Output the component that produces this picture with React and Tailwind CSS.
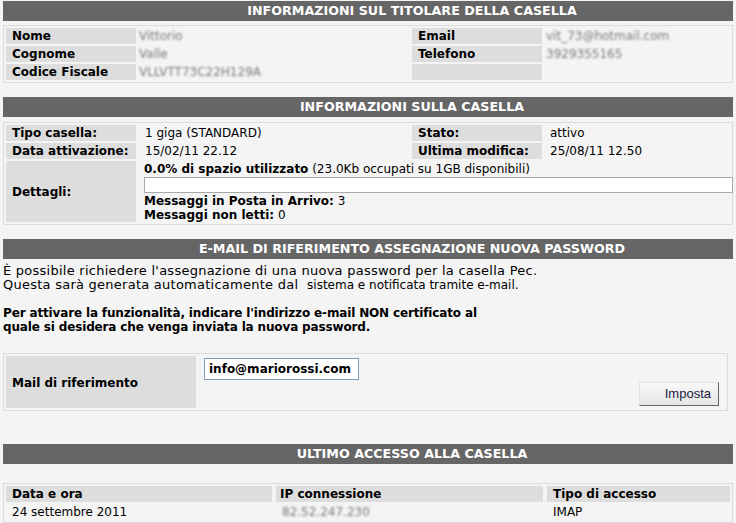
import React from 'react';

const font = { fontFamily: '"DejaVu Sans", Verdana, sans-serif' };

function Header({ children }) {
  return (
    <div className="h-[20px] bg-[#666666] text-white font-bold text-[12.7px] leading-[20px] text-center pl-[88px]">
      {children}
    </div>
  );
}

function Blur({ children }) {
  return (
    <span className="inline-block text-[#7a7a7a] blur-[1.2px] whitespace-nowrap">
      {children}
    </span>
  );
}

export default function App() {
  return (
    <div className="w-[736px] h-[523px] overflow-hidden bg-[#f4f4f4] text-black text-[12px] leading-[14px] px-[3px] pt-px" style={font}>
      <Header>INFORMAZIONI SUL TITOLARE DELLA CASELLA</Header>

      <div className="mt-[4px] border border-[#dcdcdc] p-[2px]">
        <div className="grid grid-cols-[130px_272px_130px_1fr] gap-[2px] auto-rows-[16px] leading-[16px]">
          <div className="bg-[#dddddd] font-bold pl-[6px]">Nome</div>
          <div className="pl-[1px]"><Blur>Vittorio</Blur></div>
          <div className="bg-[#dddddd] font-bold pl-[6px]">Email</div>
          <div className="pl-[2px]"><Blur>vit_73@hotmail.com</Blur></div>
          <div className="bg-[#dddddd] font-bold pl-[6px]">Cognome</div>
          <div className="pl-[1px]"><Blur>Valle</Blur></div>
          <div className="bg-[#dddddd] font-bold pl-[6px]">Telefono</div>
          <div className="pl-[2px]"><Blur>3929355165</Blur></div>
          <div className="bg-[#dddddd] font-bold pl-[6px]">Codice Fiscale</div>
          <div className="pl-[1px]"><Blur>VLLVTT73C22H129A</Blur></div>
          <div className="bg-[#dddddd]"></div>
          <div></div>
        </div>
      </div>

      <div className="mt-[14px]">
        <Header>INFORMAZIONI SULLA CASELLA</Header>
      </div>

      <div className="mt-[5px] border border-[#dcdcdc] p-[2px]">
        <div className="grid grid-cols-[130px_272px_130px_1fr] gap-[2px] leading-[16px]">
          <div className="bg-[#dddddd] font-bold pl-[6px] h-[16px]">Tipo casella:</div>
          <div className="pl-[7px]">1 giga (STANDARD)</div>
          <div className="bg-[#dddddd] font-bold pl-[6px]">Stato:</div>
          <div className="pl-[6px]">attivo</div>
          <div className="bg-[#dddddd] font-bold pl-[6px] h-[16px]">Data attivazione:</div>
          <div className="pl-[7px]">15/02/11 22.12</div>
          <div className="bg-[#dddddd] font-bold pl-[6px]">Ultima modifica:</div>
          <div className="pl-[6px]">25/08/11 12.50</div>
          <div className="bg-[#dddddd] font-bold pl-[6px] h-[61px] flex items-center">Dettagli:</div>
          <div className="col-span-3 pl-[6px] leading-[14px] pt-[1px]">
            <div><b>0.0% di spazio utilizzato</b> (23.0Kb occupati su 1GB disponibili)</div>
            <div className="mt-[1px] h-[16px] w-[589px] bg-white border border-[#a9a9a9]"></div>
            <div className="mt-[1px]"><b>Messaggi in Posta in Arrivo:</b> 3</div>
            <div><b>Messaggi non letti:</b> 0</div>
          </div>
        </div>
      </div>

      <div className="mt-[14px]">
        <Header>E-MAIL DI RIFERIMENTO ASSEGNAZIONE NUOVA PASSWORD</Header>
      </div>

      <div className="mt-[5px] leading-[14px]">
        <div className="text-[13px] tracking-[0.25px]">È possibile richiedere l'assegnazione di una nuova password per la casella Pec.</div>
        <div className="text-[13px] tracking-[0.25px]">
          Questa sarà generata automaticamente dal&nbsp; <span className="text-[12px] tracking-normal">sistema e notificata tramite e-mail.</span>
        </div>
        <div className="mt-[14px] font-bold tracking-[-0.15px]">Per attivare la funzionalità, indicare l'indirizzo e-mail NON certificato al</div>
        <div className="font-bold tracking-[-0.15px]">quale si desidera che venga inviata la nuova password.</div>
      </div>

      <div className="mt-[19px] w-[725px] border border-[#dcdcdc] p-[2px] flex gap-[8px]">
        <div className="w-[190px] h-[52px] bg-[#dddddd] font-bold pl-[6px] flex items-center pt-[1px]">Mail di riferimento</div>
        <div className="flex-1 flex justify-between pt-[2px] pr-[6px]">
          <div className="w-[155px] h-[22px] bg-white border border-[#7f9db9] font-bold pl-[4px] leading-[20px]">info@mariorossi.com</div>
          <button
            className="self-end mb-[2px] w-[80px] h-[24px] bg-gradient-to-b from-[#f8f8f8] to-[#e6e6e6] border border-t-[#e0e0e0] border-l-[#e0e0e0] border-r-[#666] border-b-[#666] text-right pr-[7px] text-[13px] text-[#1a1a40]"
            style={{ fontFamily: '"Liberation Sans", Arial, sans-serif' }}
          >
            Imposta
          </button>
        </div>
      </div>

      <div className="mt-[33px]">
        <Header>ULTIMO ACCESSO ALLA CASELLA</Header>
      </div>

      <div className="mt-[19px] border border-[#dcdcdc] p-[2px]">
        <div className="grid grid-cols-[266px_267px_1fr] gap-x-[4px] leading-[16px]">
          <div className="bg-[#dddddd] font-bold pl-[6px] h-[16px]">Data e ora</div>
          <div className="bg-[#dddddd] font-bold pl-[4px]">IP connessione</div>
          <div className="bg-[#dddddd] font-bold pl-[6px]">Tipo di accesso</div>
          <div className="pl-[6px] pt-[2px]">24 settembre 2011</div>
          <div className="pl-[6px] pt-[2px]"><Blur>82.52.247.230</Blur></div>
          <div className="pl-[6px] pt-[2px]">IMAP</div>
        </div>
      </div>
    </div>
  );
}
